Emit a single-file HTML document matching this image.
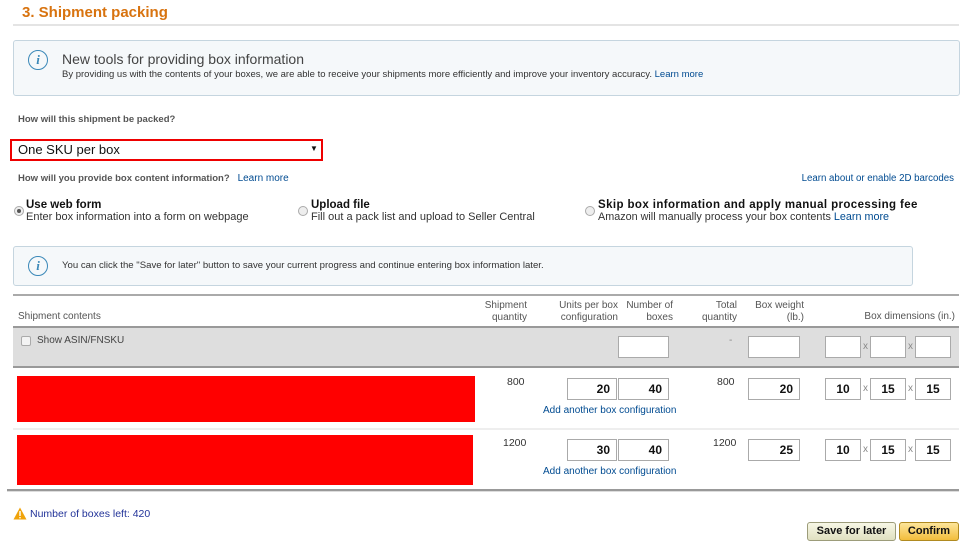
<!DOCTYPE html>
<html><head><meta charset="utf-8"><style>
*{box-sizing:border-box;margin:0;padding:0}
body{width:966px;height:547px;background:#fff;font-family:"Liberation Sans",Arial,sans-serif;position:relative;overflow:hidden;color:#333}
.a{position:absolute;white-space:nowrap}
.info{position:absolute;background:#f5f8fa;border:1px solid #c5d5df;border-radius:3px}
.ic{position:absolute;width:20px;height:20px;border:1.5px solid #3a88b8;border-radius:50%;color:#3a88b8;font:italic bold 13px "Liberation Serif",serif;text-align:center;line-height:17px}
.lk{color:#004b91}
.s11{font-size:10.5px}
.b{font-weight:bold}
.inp{position:absolute;height:22px;border:1px solid #aaa;background:#fff;font-size:12px;font-weight:bold;color:#111;line-height:20px;padding:0 6px;text-align:right}
.x{position:absolute;font-size:10px;color:#888}
.rad{position:absolute;width:10px;height:10px;border:1px solid #aaa;border-radius:50%;background:#eee}
.hd{position:absolute;font-size:10px;color:#555;text-align:right;line-height:12px}
.red{position:absolute;background:#f00}
</style></head><body>
<div class="a b" style="left:22px;top:4px;font-size:15px;color:#d8730f">3. Shipment packing</div>
<div class="a" style="left:13px;top:24px;width:946px;height:2px;background:#e4e4e4"></div>

<div class="info" style="left:13px;top:40px;width:947px;height:56px"></div>
<div class="ic" style="left:28px;top:50px">i</div>
<div class="a" style="left:62px;top:51px;font-size:14px;color:#444">New tools for providing box information</div>
<div class="a" style="left:62px;top:69px;font-size:9.5px;color:#333">By providing us with the contents of your boxes, we are able to receive your shipments more efficiently and improve your inventory accuracy. <span class="lk">Learn more</span></div>

<div class="a b" style="left:18px;top:114px;font-size:9.5px;color:#555">How will this shipment be packed?</div>
<div class="a" style="left:10px;top:139px;width:313px;height:22px;border:2px solid #e00;"></div>
<div class="a" style="left:18px;top:142px;font-size:13px;color:#111">One SKU per box</div>
<div class="a" style="left:310px;top:144px;font-size:8px;color:#111">▼</div>

<div class="a b" style="left:18px;top:173px;font-size:9.5px;color:#555">How will you provide box content information? &nbsp; <span class="lk" style="font-weight:normal;font-size:10px">Learn more</span></div>
<div class="a lk" style="right:12px;top:173px;font-size:9.7px">Learn about or enable 2D barcodes</div>

<div class="rad" style="left:14px;top:206px"><div style="width:4px;height:4px;background:#555;border-radius:50%;margin:2px"></div></div>
<div class="a b" style="left:26px;top:199px;font-size:11.5px;color:#111">Use web form</div>
<div class="a" style="left:26px;top:211px;font-size:11px;color:#333">Enter box information into a form on webpage</div>
<div class="rad" style="left:298px;top:206px"></div>
<div class="a b" style="left:311px;top:199px;font-size:11.5px;color:#111">Upload file</div>
<div class="a" style="left:311px;top:211px;font-size:11px;color:#333">Fill out a pack list and upload to Seller Central</div>
<div class="rad" style="left:585px;top:206px"></div>
<div class="a b" style="left:598px;top:199px;font-size:11.5px;color:#111;letter-spacing:0.4px">Skip box information and apply manual processing fee</div>
<div class="a" style="left:598px;top:211px;font-size:10.8px;color:#333">Amazon will manually process your box contents <span class="lk">Learn more</span></div>

<div class="info" style="left:13px;top:246px;width:900px;height:40px"></div>
<div class="ic" style="left:28px;top:256px">i</div>
<div class="a" style="left:62px;top:260px;font-size:9.6px;color:#333">You can click the "Save for later" button to save your current progress and continue entering box information later.</div>

<div class="a" style="left:13px;top:294px;width:946px;height:2px;background:#aaa"></div>
<div class="a" style="left:18px;top:311px;font-size:10px;color:#555">Shipment contents</div>
<div class="hd" style="right:439px;top:300px">Shipment<br>quantity</div>
<div class="hd" style="right:348px;top:300px">Units per box<br>configuration</div>
<div class="hd" style="right:293px;top:300px">Number of<br>boxes</div>
<div class="hd" style="right:229px;top:300px">Total<br>quantity</div>
<div class="hd" style="right:162px;top:300px">Box weight<br>(lb.)</div>
<div class="hd" style="right:11px;top:311px">Box dimensions (in.)</div>

<div class="a" style="left:13px;top:326px;width:946px;height:42px;background:#dedede;border-top:2px solid #999;border-bottom:2px solid #999"></div>
<div class="a" style="left:21px;top:336px;width:10px;height:10px;border:1px solid #aaa;background:#f3f3f3;border-radius:2px"></div>
<div class="a" style="left:37px;top:335px;font-size:10px;color:#444">Show ASIN/FNSKU</div>
<div class="inp" style="left:618px;top:336px;width:51px"></div>
<div class="a" style="left:729px;top:335px;font-size:10px;color:#888">-</div>
<div class="inp" style="left:748px;top:336px;width:52px"></div>
<div class="inp" style="left:825px;top:336px;width:36px"></div><span class="x" style="left:863px;top:341px">x</span>
<div class="inp" style="left:870px;top:336px;width:36px"></div><span class="x" style="left:908px;top:341px">x</span>
<div class="inp" style="left:915px;top:336px;width:36px"></div>

<div class="red" style="left:17px;top:376px;width:458px;height:46px"></div>
<div class="a s11" style="left:507px;top:376px">800</div>
<div class="inp" style="left:567px;top:378px;width:50px">20</div>
<div class="inp" style="left:618px;top:378px;width:51px">40</div>
<div class="a lk" style="left:543px;top:405px;font-size:10px">Add another box configuration</div>
<div class="a s11" style="left:717px;top:376px">800</div>
<div class="inp" style="left:748px;top:378px;width:52px">20</div>
<div class="inp" style="left:825px;top:378px;width:36px;text-align:center">10</div><span class="x" style="left:863px;top:383px">x</span>
<div class="inp" style="left:870px;top:378px;width:36px;text-align:center">15</div><span class="x" style="left:908px;top:383px">x</span>
<div class="inp" style="left:915px;top:378px;width:36px;text-align:center">15</div>

<div class="a" style="left:13px;top:428px;width:946px;height:2px;background:#eee"></div>

<div class="red" style="left:17px;top:435px;width:456px;height:50px"></div>
<div class="a s11" style="left:503px;top:437px">1200</div>
<div class="inp" style="left:567px;top:439px;width:50px">30</div>
<div class="inp" style="left:618px;top:439px;width:51px">40</div>
<div class="a lk" style="left:543px;top:466px;font-size:10px">Add another box configuration</div>
<div class="a s11" style="left:713px;top:437px">1200</div>
<div class="inp" style="left:748px;top:439px;width:52px">25</div>
<div class="inp" style="left:825px;top:439px;width:36px;text-align:center">10</div><span class="x" style="left:863px;top:444px">x</span>
<div class="inp" style="left:870px;top:439px;width:36px;text-align:center">15</div><span class="x" style="left:908px;top:444px">x</span>
<div class="inp" style="left:915px;top:439px;width:36px;text-align:center">15</div>

<div class="a" style="left:7px;top:489px;width:952px;height:2px;background:#999"></div>
<div class="a" style="left:7px;top:491px;width:952px;height:1px;background:#ddd"></div>

<svg class="a" style="left:13px;top:507px" width="14" height="13"><path d="M7 0.5L13.5 12.5H0.5Z" fill="#f0a30a"/><rect x="6.3" y="4" width="1.4" height="5" fill="#fff"/><rect x="6.3" y="10" width="1.4" height="1.4" fill="#fff"/></svg>
<div class="a" style="left:30px;top:508px;font-size:10.5px;color:#223399">Number of boxes left: 420</div>

<div class="a b" style="left:807px;top:522px;width:89px;height:19px;border:1px solid #9c9c7a;border-radius:3px;background:linear-gradient(#f7f7e6,#e0e0c0);font-size:11px;color:#111;text-align:center;line-height:17px">Save for later</div>
<div class="a b" style="left:899px;top:522px;width:60px;height:19px;border:1px solid #b08a20;border-radius:3px;background:linear-gradient(#fde59a,#f2bd3c);font-size:11px;color:#111;text-align:center;line-height:17px">Confirm</div>
</body></html>
